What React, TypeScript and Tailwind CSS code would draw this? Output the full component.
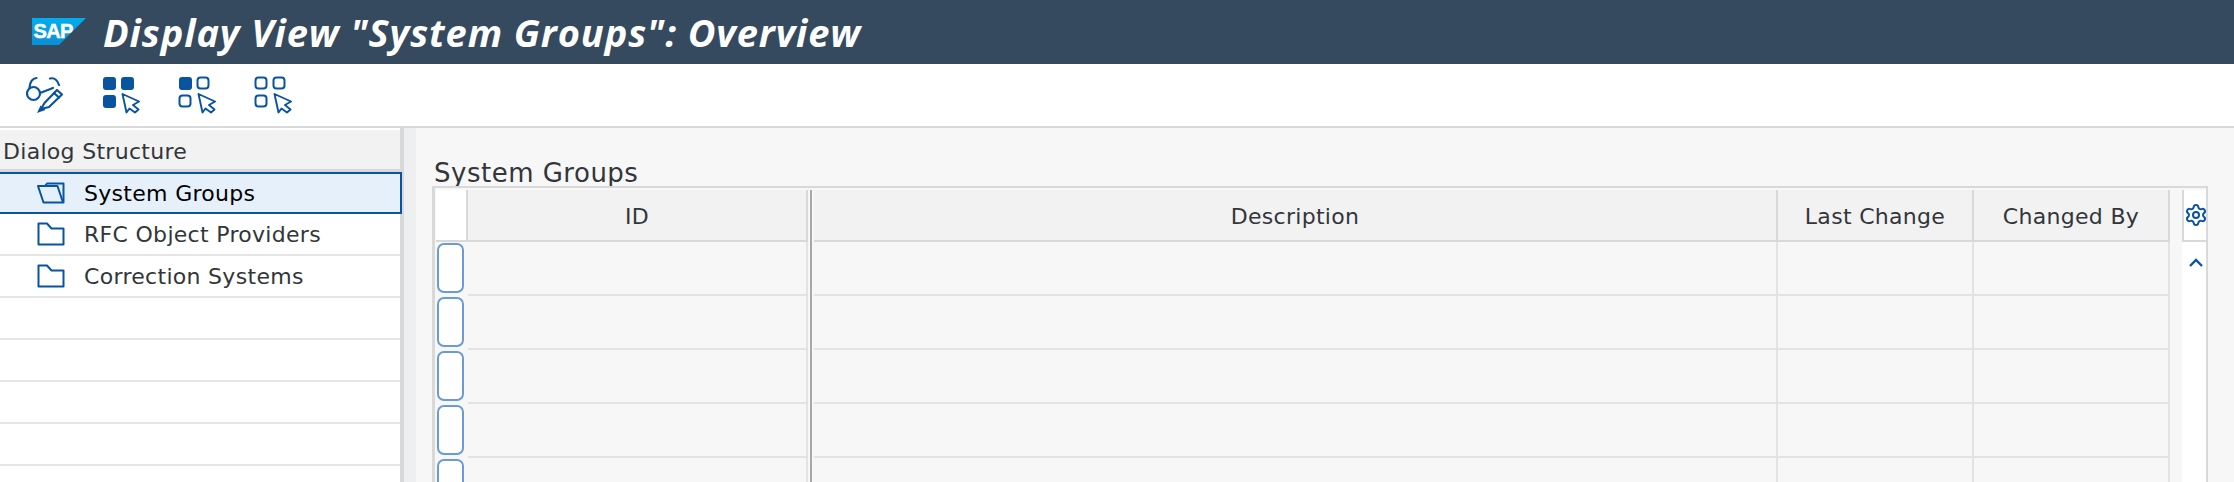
import { Settings } from "lucide-react";

const BLUE = "#0854a0";
const treeRows = ["System Groups", "RFC Object Providers", "Correction Systems", "", "", "", "", ""];

function SapLogo() {
  return (
    <svg width="56" height="28" viewBox="0 0 56 28" className="shrink-0">
      <defs>
        <linearGradient id="sapBlue" x1="0" y1="0" x2="0" y2="1">
          <stop offset="0" stopColor="#00aeef" />
          <stop offset="1" stopColor="#0a8fd6" />
        </linearGradient>
      </defs>
      <polygon points="0,0 54,0 27,27 0,27" fill="url(#sapBlue)" />
      <text x="1.5" y="20" fill="#fff" stroke="#fff" strokeWidth="0.5" fontFamily="'Liberation Sans', sans-serif" fontWeight="700" fontSize="20" letterSpacing="-0.6">
        SAP
      </text>
    </svg>
  );
}

function GlassesIcon() {
  return (
    <svg width="38" height="38" viewBox="0 0 38 38" fill="none" stroke={BLUE} strokeWidth="2.2" strokeLinecap="round" strokeLinejoin="round">
      <circle cx="7.5" cy="17.5" r="6.5" />
      <path d="M3.5 11.5 C4 6 6 2.5 10.5 2" />
      <path d="M24 2.5 C28 1.5 31 3 33 9" />
      <path d="M14 17 L27 12" />
      <path d="M15 33 L18.5 27 L31 14 L36 18.5 L23 31 Z" fill="#fff" />
      <path d="M11 37 L14.5 29.5 L19.5 34 Z" fill={BLUE} stroke="none" />
      <path d="M28 17 L33 21.5" />
    </svg>
  );
}

// three selection squares + pointer, filled says how many of them are solid
function SelectIcon({ filled }: { filled: number }) {
  const squares = [
    [1.5, 1.5],
    [19.5, 1.5],
    [1.5, 19.5],
  ];
  return (
    <svg width="38" height="38" viewBox="0 0 38 38" fill="none">
      {squares.map(([x, y], i) => (
        <rect
          key={i}
          x={i < filled ? x - 0.5 : x}
          y={i < filled ? y - 0.5 : y}
          width={i < filled ? 13 : 11}
          height={i < filled ? 13 : 11}
          rx="3"
          fill={i < filled ? BLUE : "none"}
          stroke={i < filled ? "none" : BLUE}
          strokeWidth="2"
        />
      ))}
      <path d="M20.5 18 L37 25.5 L31 29 L36.5 33.5 L33 36.5 L27.5 32.5 L24.5 36.5 Z" stroke={BLUE} strokeWidth="1.9" strokeLinejoin="round" />
    </svg>
  );
}

function FolderIcon({ open }: { open: boolean }) {
  if (open) {
    return (
      <svg width="28" height="22" viewBox="0 0 28 22" fill="none" stroke={BLUE} strokeWidth="2" strokeLinejoin="round">
        <path d="M1 4 H8 L10 1.5 H26.5 V20.5 H6.5 Z" />
        <path d="M2 4 H20.5 L26 20.5" />
      </svg>
    );
  }
  return (
    <svg width="28" height="24" viewBox="0 0 28 24" fill="none" stroke={BLUE} strokeWidth="2" strokeLinejoin="round">
      <path d="M1.5 1.5 H10 L14.5 6.5 H26.5 V22.5 H1.5 Z" />
    </svg>
  );
}

function TreeRow({ label, index }: { label: string; index: number }) {
  if (index === 0) {
    return (
      <div className="flex h-[42px] w-[402px] shrink-0 items-center border-y-2 border-r-2 border-[#0854a0] bg-[#e5f0fa] pl-[37px] text-black">
        <FolderIcon open />
        <span className="ml-[19px]">{label}</span>
      </div>
    );
  }
  return (
    <div className="flex h-[42px] w-[400px] shrink-0 items-center border-b-2 border-[#e5e5e5] pl-[37px] text-[#32363a]">
      {label && <FolderIcon open={false} />}
      {label && <span className="ml-[19px]">{label}</span>}
    </div>
  );
}

function HeaderCell({ label, className }: { label: string; className: string }) {
  return (
    <div className={`flex items-center justify-center border-b-2 border-r-2 border-[#d9d9d9] bg-[#f2f2f2] pt-[3px] ${className}`}>
      {label}
    </div>
  );
}

function DataRow() {
  const cell = "border-b-2 border-r-2 border-[#e3e3e3]";
  return (
    <div className="flex h-[54px] shrink-0">
      <div className="w-[32px] pl-px pt-px">
        <div className="h-[50px] w-[27px] rounded-[7px] border-2 border-[#6a9bd3] bg-white" />
      </div>
      <div className={`w-[340px] ${cell}`} />
      <div className="mx-[2px] w-[2px] bg-[#a8a8a8]" />
      <div className={`w-[964px] ${cell}`} />
      <div className={`w-[196px] ${cell}`} />
      <div className={`w-[196px] ${cell}`} />
    </div>
  );
}

export default function App() {
  return (
    <div
      className="flex h-[482px] w-[2234px] flex-col overflow-hidden bg-[#f7f7f7] text-[22px] tracking-[0.3px] text-[#32363a]"
      style={{ fontFamily: "'DejaVu Sans', sans-serif" }}
    >
      <header className="flex h-[64px] shrink-0 items-center bg-[#354a5f] pl-[32px]">
        <SapLogo />
        <h1 className="ml-[15px] text-[38px] font-bold italic tracking-[0.9px] text-white" style={{ fontFamily: "'Open Sans', sans-serif" }}>
          Display View "System Groups": Overview
        </h1>
      </header>

      <div className="flex h-[64px] shrink-0 items-center gap-[38px] border-b-2 border-[#d9d9d9] bg-white pl-[26px]">
        <GlassesIcon />
        <SelectIcon filled={3} />
        <SelectIcon filled={1} />
        <SelectIcon filled={0} />
      </div>

      <div className="flex min-h-0 flex-1">
        <aside className="flex w-[404px] shrink-0 flex-col border-r-[4px] border-[#d9d9d9] bg-white">
          <div className="mt-[2px] flex h-[39px] shrink-0 items-center bg-[#f2f2f2] pl-[3px] pt-[3px]">Dialog Structure</div>
          <div className="h-[3px] shrink-0 bg-[#d9d9d9]" />
          {treeRows.map((label, i) => (
            <TreeRow key={i} label={label} index={i} />
          ))}
        </aside>
        <div className="w-[12px] shrink-0 bg-[#eeeff1]" />

        <main className="flex min-w-0 flex-1 flex-col pl-[16px]">
          <h2 className="mt-[26px] h-[32px] pl-[2px] text-[26px] leading-[38px] tracking-[0.5px]">System Groups</h2>
          <div className="flex min-h-0 w-[1776px] flex-1 border-l-[3px] border-r-2 border-t-2 border-[#d9d9d9] pl-px pt-[2px]">
            <div className="flex w-[1746px] flex-col">
              <div className="flex h-[52px] shrink-0">
                <div className="w-[32px] border-b-2 border-r-2 border-[#d9d9d9] bg-white" />
                <HeaderCell label="ID" className="w-[340px]" />
                <div className="mx-[2px] w-[2px] bg-[#a8a8a8]" />
                <HeaderCell label="Description" className="w-[964px]" />
                <HeaderCell label="Last Change" className="w-[196px]" />
                <HeaderCell label="Changed By" className="w-[196px]" />
              </div>
              {[0, 1, 2, 3, 4].map((r) => (
                <DataRow key={r} />
              ))}
            </div>
            <div className="ml-[12px] flex w-[24px] flex-col bg-white">
              <div className="flex h-[52px] shrink-0 items-center justify-end border-b-2 border-l-2 border-[#d9d9d9]">
                <Settings size={24} color={BLUE} strokeWidth={2} className="mr-[-2px] shrink-0" />
              </div>
              <svg width="24" height="12" viewBox="0 0 24 12" fill="none" className="mt-[15px]">
                <polyline points="8,9 14,3 20,9" stroke={BLUE} strokeWidth="2.4" />
              </svg>
            </div>
          </div>
        </main>
      </div>
    </div>
  );
}
